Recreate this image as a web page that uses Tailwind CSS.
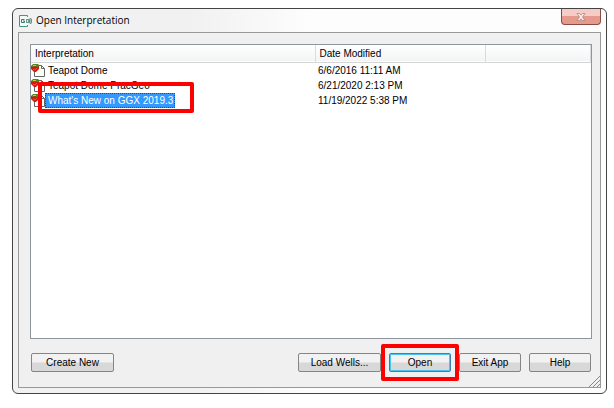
<!DOCTYPE html>
<html lang="en">
<head>
    <meta charset="UTF-8">
    <meta name="viewport" content="width=device-width, initial-scale=1">
    <title>Open Interpretation</title>
    <script src="https://cdn.jsdelivr.net/npm/@tailwindcss/browser@4"></script>
</head>
<body class="bg-white font-['Liberation_Sans',Arial,sans-serif] text-[10px] leading-[15px] text-black">
    <svg class="hidden">
        <symbol id="file-icon" viewBox="0 0 14 14">
            <path d="M3.500 2.500h7l3 3v8h-10z" fill="#fffff4" stroke="#666"/>
            <path d="M10.500 2.500v3h3" fill="none" stroke="#666"/>
            <path d="M0 3h8v3L5 9H3L0 6z" fill="#cf1a12"/>
            <path d="M2 6l2 1 2-2" fill="none" stroke="#f0543c"/>
            <path d="M0 3l2-2h5l2 2-3 1-2-1-2 1z" fill="#4c8a1e"/>
            <path d="M2 2h3v1H2z" fill="#e8c030"/>
        </symbol>
    </svg>
    <div class="flex min-h-screen flex-col pt-2 pr-[7px] pb-[14px] pl-3">
        <main class="flex grow flex-col rounded-md border border-[#444] bg-linear-to-r from-[#f1f1f1] from-30% to-[#fdfdfd] to-50% px-[5px] pb-[5px]">
            <header class="flex h-[23px] justify-between">
                <div class="flex items-center gap-1">
                    <svg class="h-[14px] w-[14px]" viewBox="0 0 14 14">
                        <path d="M9.500 3V1.500h-8v11h8V11" fill="#f4faf8" stroke="#4f8f82"/>
                        <path d="M6.500 5.500h-3v3h3V7H5" fill="none" stroke="#357b6e"/>
                        <rect x="8.500" y="5.500" width="2" height="3" fill="#dfeae8" stroke="#6a9c92"/>
                        <rect x="11.500" y="4.500" width="2" height="5" rx="1" fill="#9fbfb8" stroke="#5d8f86"/>
                    </svg>
                    <h1 class="font-['Open_Sans','Noto_Sans',sans-serif] text-[10px]">Open Interpretation</h1>
                </div>
                <button type="button" aria-label="Close" class="flex h-4 w-10 items-center justify-center rounded-b border border-t-0 border-[#8c4a45] bg-linear-to-b from-[#f5cdc6] from-45% to-[#e59a8d] to-50%">
                    <svg class="h-2 w-[10px]" viewBox="0 0 10 8">
                        <path d="M1 .5h2.500L5 2.200 6.500.5H9L6.500 4 9 7.500H6.500L5 5.800 3.500 7.500H1L3.500 4z" fill="#f8eeee" stroke="#a98784" stroke-width=".8"/>
                    </svg>
                </button>
            </header>
            <section class="relative flex grow flex-col border border-[#999] bg-[#f0f0f0] px-[11px] pt-[11px] pb-[15px]">
                <div class="mr-[-3px] grow border border-[#8e959e] bg-white">
                    <table class="w-full table-fixed border-collapse text-left">
                        <colgroup>
                            <col class="w-[284px]">
                            <col class="w-[170px]">
                            <col>
                        </colgroup>
                        <thead>
                            <tr class="h-[17px] border-b border-[#d5d5d5] bg-linear-to-b from-white to-[#f3f4f5]">
                                <th class="border-r border-[#d8dcde] pt-px pl-1 font-normal">Interpretation</th>
                                <th class="border-r border-[#d8dcde] pt-px pl-1 font-normal">Date Modified</th>
                                <th class="border-r border-[#d8dcde]"></th>
                            </tr>
                        </thead>
                        <tbody>
                            <tr>
                                <td>
                                    <div class="flex">
                                        <svg class="h-[14px] w-[14px]"><use href="#file-icon"/></svg>
                                        <span class="pl-[3px]">Teapot Dome</span>
                                    </div>
                                </td>
                                <td class="pl-[3px]">6/6/2016 11:11 AM</td>
                                <td></td>
                            </tr>
                            <tr>
                                <td>
                                    <div class="flex">
                                        <svg class="h-[14px] w-[14px]"><use href="#file-icon"/></svg>
                                        <span class="pl-[3px]">Teapot Dome PracGeo</span>
                                    </div>
                                </td>
                                <td class="pl-[3px]">6/21/2020 2:13 PM</td>
                                <td></td>
                            </tr>
                            <tr>
                                <td>
                                    <div class="relative flex">
                                        <svg class="h-[14px] w-[14px]"><use href="#file-icon"/></svg>
                                        <span class="w-[130px] border border-dotted border-[#1c4f86] bg-[#3399ff] pl-[2px] leading-[13px] whitespace-nowrap text-white">What's New on GGX 2019.3</span>
                                        <div class="absolute -top-[11px] left-[7px] h-[31px] w-[156px] rounded-xs border-4 border-[#ff0000]"></div>
                                    </div>
                                </td>
                                <td class="pl-[3px]">11/19/2022 5:38 PM</td>
                                <td></td>
                            </tr>
                        </tbody>
                    </table>
                </div>
                <footer class="mt-[14px] mr-[-2px] flex justify-between pl-px">
                    <button type="button" class="h-[19px] w-[83px] rounded-xs border border-[#858585] bg-linear-to-b from-[#f2f2f2] from-45% to-[#d8d8d8] to-55%">Create New</button>
                    <div class="flex gap-2">
                        <button type="button" class="h-[19px] w-[83px] rounded-xs border border-[#858585] bg-linear-to-b from-[#f2f2f2] from-45% to-[#d8d8d8] to-55%">Load Wells...</button>
                        <div class="relative">
                            <button type="button" class="h-[19px] w-[62px] rounded-xs border border-[#3c7fb1] bg-linear-to-b from-[#f2f2f2] from-45% to-[#d8d8d8] to-55% inset-ring inset-ring-[#48c4ee]">Open</button>
                            <div class="absolute -inset-x-2 -inset-y-[9px] rounded-xs border-4 border-[#ff0000]"></div>
                        </div>
                        <button type="button" class="h-[19px] w-[62px] rounded-xs border border-[#858585] bg-linear-to-b from-[#f2f2f2] from-45% to-[#d8d8d8] to-55%">Exit App</button>
                        <button type="button" class="h-[19px] w-[62px] rounded-xs border border-[#858585] bg-linear-to-b from-[#f2f2f2] from-45% to-[#d8d8d8] to-55%">Help</button>
                    </div>
                </footer>
                <svg class="absolute right-0 bottom-0 h-3 w-3" viewBox="0 0 12 12">
                    <path d="M1 12L12 1M5 12l7-7M9 12l3-3" fill="none" stroke="#888"/>
                </svg>
            </section>
        </main>
    </div>
</body>
</html>
